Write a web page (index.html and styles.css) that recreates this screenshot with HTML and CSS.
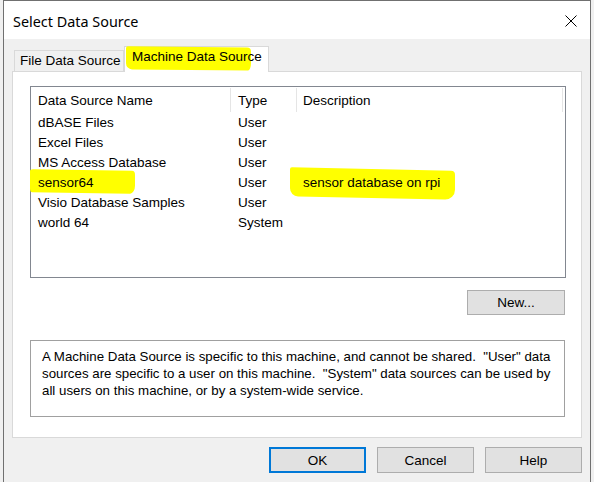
FILE: index.html
```html
<!DOCTYPE html>
<html>
<head>
<meta charset="utf-8">
<link rel="stylesheet" href="styles.css">
</head>
<body>
<div class="window">
  <div class="titlebar">
    <span class="title">Select Data Source</span>
    <svg class="close" width="12" height="12" viewBox="0 0 12 12"><path d="M0.5 0.5 L11.5 11.5 M11.5 0.5 L0.5 11.5" stroke="#000" stroke-width="1" fill="none"/></svg>
  </div>
  <div class="content">
    <div class="tabs">
      <div class="tab">File Data Source</div>
      <div class="tab active"><span class="hl hl-tab"></span><span class="txt">Machine Data Source</span></div>
    </div>
    <div class="panel">
      <div class="list">
        <div class="row header">
          <div class="c1">Data Source Name</div>
          <div class="c2">Type</div>
          <div class="c3">Description</div>
          <div class="c4"></div>
        </div>
        <div class="row"><div class="c1">dBASE Files</div><div class="c2">User</div><div class="c3"></div></div>
        <div class="row"><div class="c1">Excel Files</div><div class="c2">User</div><div class="c3"></div></div>
        <div class="row"><div class="c1">MS Access Database</div><div class="c2">User</div><div class="c3"></div></div>
        <div class="row"><div class="c1 mark"><span class="hl hl-name"></span><span class="txt">sensor64</span></div><div class="c2">User</div><div class="c3 mark"><span class="hl hl-desc"></span><span class="txt">sensor database on rpi</span></div></div>
        <div class="row"><div class="c1">Visio Database Samples</div><div class="c2">User</div><div class="c3"></div></div>
        <div class="row"><div class="c1">world 64</div><div class="c2">System</div><div class="c3"></div></div>
      </div>
      <div class="newrow"><button class="btn new">New...</button></div>
      <div class="desc">A Machine Data Source is specific to this machine, and cannot be shared.&nbsp; "User" data<br>sources are specific to a user on this machine.&nbsp; "System" data sources can be used by<br>all users on this machine, or by a system-wide service.</div>
    </div>
    <div class="buttons">
      <button class="btn ok">OK</button>
      <button class="btn">Cancel</button>
      <button class="btn">Help</button>
    </div>
  </div>
</div>
</body>
</html>
```
FILE: styles.css
```css
html, body {
  margin: 0;
  padding: 0;
}
body {
  width: 594px;
  height: 482px;
  background: #f0f0f0;
  overflow: hidden;
  font-family: "Liberation Sans", Arial, sans-serif;
  font-size: 13.5px;
  color: #000;
}
.window {
  margin-left: 3px;
  width: 588px;
  height: 482px;
  box-sizing: border-box;
  border: 1px solid #707070;
  border-bottom: none;
  background: #f0f0f0;
  display: flex;
  flex-direction: column;
}
.titlebar {
  height: 38px;
  background: #fff;
  display: flex;
  align-items: center;
  justify-content: space-between;
  padding-left: 9px;
  padding-right: 13px;
}
.title {
  font-family: "Noto Sans", "Segoe UI", sans-serif;
  font-size: 14.4px;
  position: relative;
  top: 1px;
}
.close {
  display: block;
  position: relative;
  top: 1px;
}
.content {
  padding: 7px 8px 0 8px;
  display: flex;
  flex-direction: column;
}
.tabs {
  display: flex;
  align-items: flex-end;
  padding-left: 2px;
  height: 25px;
  position: relative;
  z-index: 2;
}
.tab {
  height: 21px;
  box-sizing: border-box;
  border: 1px solid #d9d9d9;
  border-bottom: none;
  background: #f0f0f0;
  line-height: 20px;
  padding: 0 4px 0 5px;
  width: 110px;
  margin-bottom: 0;
  white-space: nowrap;
}
.tab.active {
  height: 26px;
  width: 145px;
  background: #fff;
  padding: 0 8px 0 7px;
  margin-bottom: -1px;
  border-left: 1px solid #d9d9d9;
  position: relative;
}
.panel {
  background: #fff;
  border: 1px solid #d9d9d9;
  height: 367px;
  box-sizing: border-box;
  padding: 14px 15px 0 17px;
  display: flex;
  flex-direction: column;
}
.list {
  height: 192px;
  box-sizing: border-box;
  border: 1px solid #828790;
  background: #fff;
}
.row {
  display: flex;
  height: 20px;
  line-height: 20px;
  white-space: nowrap;
}
.row.header {
  height: 26px;
  padding-top: 4px;
  box-sizing: border-box;
}
.c1 { width: 200px; padding-left: 7px; box-sizing: border-box; }
.c2 { width: 66px; padding-left: 7px; box-sizing: border-box; }
.c3 { width: 266px; padding-left: 6px; box-sizing: border-box; }
.c4 { flex: 1; }
.header .c1, .header .c2, .header .c3 {
  border-right: 1px solid #e5e5e5;
  margin-top: -3px;
  padding-top: 3px;
  height: 24px;
}
.header .c1 { width: 200px; }
.mark { position: relative; }
.txt { position: relative; z-index: 1; }
.hl {
  position: absolute;
  background: #ffff00;
  z-index: 0;
}
.hl-tab {
  left: 1px;
  top: 0px;
  width: 125px;
  height: 23px;
  border-radius: 2px 4px 3px 6px / 2px 4px 8px 6px;
  transform: skewY(0.6deg);
}
.hl-name {
  left: -1px;
  top: -3px;
  width: 105px;
  height: 23px;
  border-radius: 3px 3px 5px 2px / 2px 4px 8px 4px;
  transform: skewY(0.8deg);
}
.hl-desc {
  left: -7px;
  top: -4px;
  width: 165px;
  height: 29px;
  border-radius: 2px 4px 10px 8px / 2px 4px 10px 8px;
  transform: skewY(1.2deg);
}
.newrow {
  display: flex;
  justify-content: flex-end;
  margin-top: 12px;
  padding-right: 1px;
}
.btn {
  font-family: "Liberation Sans", Arial, sans-serif;
  font-size: 13.5px;
  color: #000;
  background: #e1e1e1;
  border: 1px solid #adadad;
  width: 98px;
  height: 25px;
  padding: 0;
  margin: 0;
  box-sizing: border-box;
}
.desc {
  margin-top: 25px;
  height: 77px;
  box-sizing: border-box;
  border: 1px solid #a0a0a0;
  padding: 7px 0 0 11px;
  line-height: 17px;
  font-size: 13.3px;
  white-space: nowrap;
  margin-right: 1px;
}
.buttons {
  display: flex;
  justify-content: flex-end;
  gap: 11px;
  margin-top: 9px;
  padding-right: 0px;
}
.buttons .btn {
  height: 26px;
  width: 97px;
}
.btn.ok {
  border: 2px solid #0078d7;
}
```
